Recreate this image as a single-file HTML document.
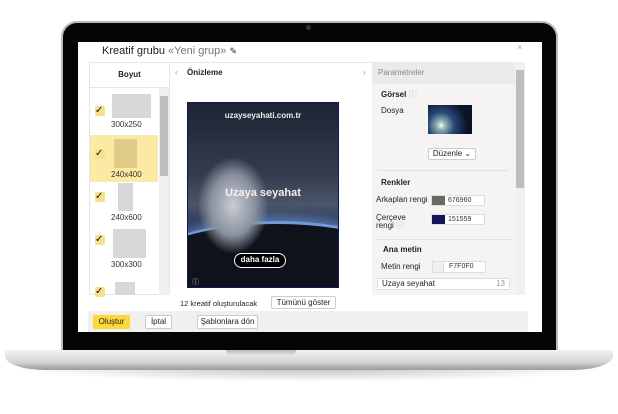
<!DOCTYPE html>
<html><head><meta charset="utf-8"><style>
*{margin:0;padding:0;box-sizing:border-box}
body{width:618px;height:414px;background:#fff;position:relative;overflow:hidden;font-family:"Liberation Sans",Arial,sans-serif;font-size:8px;color:#222}
.a{position:absolute}
.lid{left:61px;top:21px;width:497px;height:332px;background:#050505;border-radius:16px 16px 0 0;border:2px solid #bbb;border-bottom:none}
.screen{left:78px;top:42px;width:464px;height:290px;background:#fff;overflow:hidden}
.base{left:5px;top:350px;width:608px;height:20px;background:linear-gradient(#f2f2f2,#d6d6d6 60%,#9a9a9a);border-radius:2px 2px 40px 40px/2px 2px 14px 14px}
.shadow{left:10px;top:368px;width:598px;height:14px;background:radial-gradient(ellipse at center top,rgba(0,0,0,.25),rgba(0,0,0,0) 70%)}
.notch{left:226px;top:350px;width:70px;height:6px;background:linear-gradient(#bbb,#e8e8e8);border-radius:0 0 6px 6px}
.chk{width:10px;height:10px;background:#f8e08a;border-radius:2px;font-size:10px;line-height:9px;color:#111}
.th{background:#d8d8d8}
.lbl{font-size:8px;color:#333}
.btn{background:#fff;border:1px solid #ccc;border-radius:2px;font-size:8px;text-align:center;line-height:13px}
.inp{background:#fff;border:1px solid #ddd;font-size:7px;color:#333;line-height:10px;padding-left:16px}
</style></head><body>
<div class="a shadow"></div>
<div class="a lid"></div>
<div class="a" style="left:306px;top:25px;width:5px;height:5px;border-radius:50%;background:#333"></div>
<div class="a base"></div>
<div class="a notch"></div>
<div class="a screen">
  <div class="a" style="left:24px;top:3px;font-size:11px;color:#222">Kreatif grubu <span style="color:#777">«Yeni grup»</span> <span style="font-size:9px">✎</span></div>
  <div class="a" style="left:439px;top:0px;color:#aaa;font-size:9px">×</div>
  <!-- left column -->
  <div class="a" style="left:11px;top:20px;width:81px;height:233px;border:1px solid #e6e6e6;background:#fff"></div>
  <div class="a" style="left:11px;top:20px;width:81px;height:26px;border-bottom:1px solid #e6e6e6;text-align:center;line-height:26px;font-weight:bold;font-size:8px">Boyut</div>
  <div class="a" style="left:12px;top:93px;width:68px;height:47px;background:#fce9a3"></div>
  <div class="a chk" style="left:17px;top:64px">✓</div>
  <div class="a th" style="left:34px;top:52px;width:39px;height:24px"></div>
  <div class="a lbl" style="left:33px;top:78px">300x250</div>
  <div class="a chk" style="left:17px;top:107px">✓</div>
  <div class="a" style="left:36px;top:97px;width:23px;height:29px;background:#e0cc88"></div>
  <div class="a lbl" style="left:33px;top:128px">240x400</div>
  <div class="a chk" style="left:17px;top:150px">✓</div>
  <div class="a th" style="left:40px;top:141px;width:15px;height:28px"></div>
  <div class="a lbl" style="left:33px;top:171px">240x600</div>
  <div class="a chk" style="left:17px;top:193px">✓</div>
  <div class="a th" style="left:35px;top:187px;width:33px;height:29px"></div>
  <div class="a lbl" style="left:33px;top:218px">300x300</div>
  <div class="a chk" style="left:17px;top:245px">✓</div>
  <div class="a th" style="left:37px;top:240px;width:20px;height:13px"></div>
  <div class="a" style="left:81px;top:46px;width:10px;height:207px;background:#f0f0f0"></div>
  <div class="a" style="left:82px;top:54px;width:8px;height:80px;background:#bdbdbd"></div>
  <!-- preview -->
  <div class="a" style="left:92px;top:20px;width:202px;height:233px;background:#fff;border-top:1px solid #e6e6e6"></div>
  <div class="a" style="left:97px;top:26px;color:#999">‹</div>
  <div class="a" style="left:109px;top:26px;font-weight:bold;font-size:8px">Önizleme</div>
  <div class="a" style="left:285px;top:26px;color:#999">›</div>
  <div class="a" style="left:109px;top:60px;width:152px;height:186px;background:linear-gradient(180deg,#1d2433 0%,#343e50 40%,#4b5568 55%,#2a3a58 66%,#141a26 78%,#0d1018 100%);border:1px solid #151559;overflow:hidden">
    <div class="a" style="left:-60px;top:118px;width:300px;height:120px;border-radius:50%;border-top:3px solid #6f9ad8;box-shadow:0 -4px 10px rgba(120,160,230,.6);background:#0e121b"></div>
    <div class="a" style="left:10px;top:55px;width:70px;height:95px;border-radius:40% 40% 30% 30%;background:radial-gradient(ellipse,#c8ccd4 0%,#8a919e 45%,rgba(80,90,110,0) 72%)"></div>
    <div class="a" style="left:0;top:8px;width:150px;text-align:center;color:#eee;font-size:8px;font-weight:bold">uzayseyahati.com.tr</div>
    <div class="a" style="left:0;top:84px;width:150px;text-align:center;color:#f7f0f0;font-size:11px;font-weight:bold">Uzaya seyahat</div>
    <div class="a" style="left:46px;top:150px;width:52px;height:15px;border:1.5px solid #fff;border-radius:8px;background:#000;color:#fff;font-size:8px;font-weight:bold;text-align:center;line-height:12px">daha fazla</div>
    <div class="a" style="left:4px;top:174px;color:#ccc;font-size:7px">ⓘ</div>
  </div>
  <!-- params -->
  <div class="a" style="left:294px;top:20px;width:145px;height:233px;background:#f5f4f2"></div>
  <div class="a" style="left:294px;top:20px;width:145px;height:22px;background:#ebeae8;color:#888;font-size:8px;line-height:22px;padding-left:6px">Parametreler</div>
  <div class="a" style="left:437px;top:20px;width:10px;height:233px;background:#f0f0f0"></div>
  <div class="a" style="left:438px;top:28px;width:8px;height:118px;background:#bdbdbd"></div>
  <div class="a" style="left:303px;top:47px;font-weight:bold;font-size:8px">Görsel <span style="color:#bbb;font-weight:normal">ⓘ</span></div>
  <div class="a" style="left:303px;top:64px;font-size:8px">Dosya</div>
  <div class="a" style="left:350px;top:63px;width:44px;height:29px;background:radial-gradient(circle at 30% 70%,#fff 0,#9bb 10%,#2a4a7a 35%,#0b1426 70%)"></div>
  <div class="a btn" style="left:350px;top:106px;width:48px;height:12px;line-height:10px">Düzenle ⌄</div>
  <div class="a" style="left:300px;top:128px;width:130px;height:1px;background:#e2e2e2"></div>
  <div class="a" style="left:303px;top:136px;font-weight:bold;font-size:8px">Renkler</div>
  <div class="a" style="left:298px;top:153px;font-size:8px">Arkaplan rengi</div>
  <div class="a inp" style="left:353px;top:153px;width:54px;height:11px;position:absolute">676960</div>
  <div class="a" style="left:354px;top:154px;width:13px;height:9px;background:#676960"></div>
  <div class="a" style="left:298px;top:172px;font-size:8px;line-height:8px">Çerçeve<br>rengi <span style="color:#bbb">ⓘ</span></div>
  <div class="a inp" style="left:353px;top:172px;width:54px;height:11px">151559</div>
  <div class="a" style="left:354px;top:173px;width:13px;height:9px;background:#151559"></div>
  <div class="a" style="left:298px;top:197px;width:136px;height:1px;background:#e2e2e2"></div>
  <div class="a" style="left:305px;top:203px;font-weight:bold;font-size:8px">Ana metin</div>
  <div class="a" style="left:303px;top:220px;font-size:8px">Metin rengi</div>
  <div class="a inp" style="left:354px;top:219px;width:54px;height:12px;padding-left:16px">F7F0F0</div>
  <div class="a" style="left:355px;top:220px;width:11px;height:10px;background:#f1f0ee;border-right:1px solid #ddd"></div>
  <div class="a" style="left:299px;top:236px;width:133px;height:12px;background:#fff;border:1px solid #ddd;font-size:8px;line-height:10px;padding:0 4px">Uzaya seyahat<span style="float:right;color:#999">13</span></div>
  <!-- bottom -->
  <div class="a" style="left:102px;top:257px;font-size:7.5px">12 kreatif oluşturulacak</div>
  <div class="a btn" style="left:193px;top:254px;width:65px;height:13px;line-height:11px">Tümünü göster</div>
  <div class="a" style="left:10px;top:269px;width:440px;height:21px;background:#f0f0ef"></div>
  <div class="a" style="left:15px;top:273px;width:37px;height:14px;background:#fcd83a;border-radius:2px;text-align:center;line-height:14px;font-size:8px">Oluştur</div>
  <div class="a btn" style="left:67px;top:273px;width:27px;height:14px;line-height:12px">İptal</div>
  <div class="a btn" style="left:119px;top:273px;width:61px;height:14px;line-height:12px">Şablonlara dön</div>
</div>
</body></html>
